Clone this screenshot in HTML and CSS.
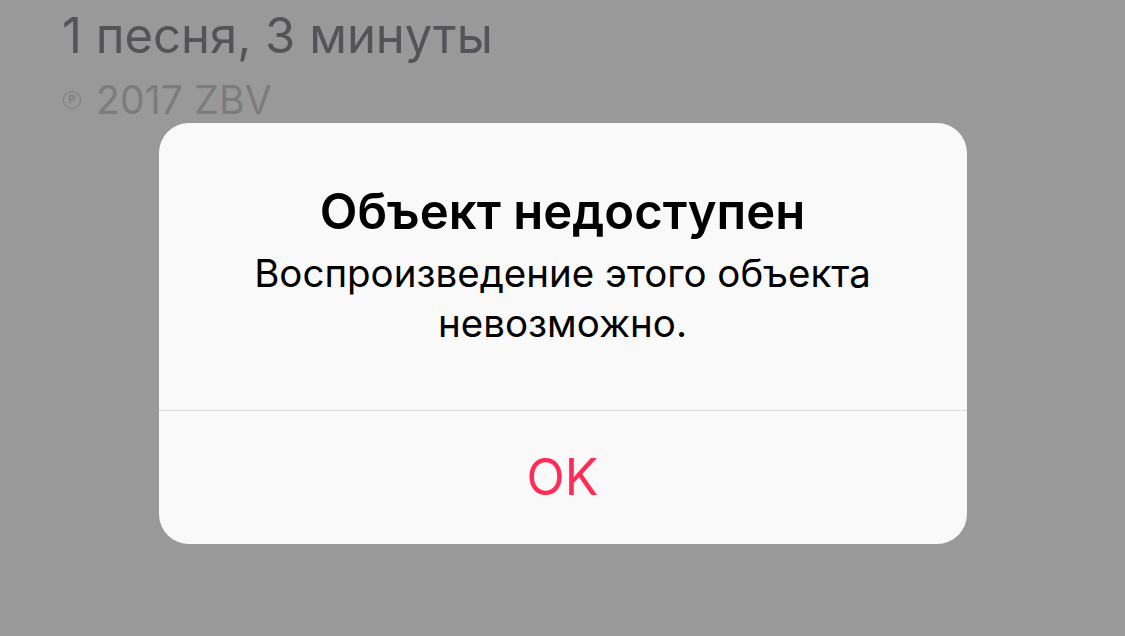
FILE: index.html
```html
<!DOCTYPE html>
<html lang="ru">
<head>
<meta charset="utf-8">
<link rel="stylesheet" href="styles.css">
</head>
<body>
<div class="screen">
  <div class="info">
    <div class="info-count">1 песня, 3 минуты</div>
    <div class="info-copy"><span class="phono">℗</span> 2017 ZBV</div>
  </div>
  <div class="alert">
    <div class="alert-content">
      <div class="alert-title">Объект недоступен</div>
      <div class="alert-message">Воспроизведение этого объекта<br>невозможно.</div>
    </div>
    <div class="alert-actions">
      <div class="alert-button">OK</div>
    </div>
  </div>
</div>
</body>
</html>
```

FILE: styles.css
```css
html, body {
  margin: 0;
  padding: 0;
  width: 1125px;
  height: 636px;
  overflow: hidden;
  background: #999999;
}
.screen {
  display: flex;
  flex-direction: column;
  font-family: Inter, "Noto Sans", sans-serif;
}
.info {
  padding-left: 62px;
  padding-top: 6px;
}
.info-count {
  font-size: 49px;
  line-height: 60px;
  color: #545458;
}
.info-copy {
  font-size: 39px;
  line-height: 52px;
  color: #7c7c7c;
  display: flex;
  align-items: baseline;
  margin-top: 8px;
  letter-spacing: 0.2px;
}
.phono {
  display: inline-flex;
  align-items: center;
  justify-content: center;
  width: 16px;
  height: 16px;
  border: 1.5px solid #7c7c7c;
  border-radius: 50%;
  font-size: 11px;
  line-height: 1;
  color: transparent;
  position: relative;
  top: -11px;
  margin-right: 15px;
  margin-left: 1px;
}
.phono::after {
  content: "P";
  position: absolute;
  color: #7c7c7c;
  font-size: 11px;
  font-weight: 600;
}
.alert {
  align-self: center;
  margin-top: -3px;
  width: 808px;
  height: 421px;
  background: #f9f9f9;
  border-radius: 30px;
  display: flex;
  flex-direction: column;
}
.alert-content {
  height: 288px;
  box-sizing: border-box;
  border-bottom: 1px solid #dbdbdb;
  text-align: center;
  padding-top: 59px;
}
.alert-title {
  font-size: 49px;
  font-weight: 600;
  line-height: 60px;
  color: #000;
}
.alert-message {
  font-size: 38.5px;
  line-height: 50px;
  color: #000;
  margin-top: 6px;
}
.alert-actions {
  flex: 1;
  display: flex;
  align-items: center;
  justify-content: center;
}
.alert-button {
  font-size: 50px;
  color: #ff2d55;
  padding-bottom: 2px;
}
```
